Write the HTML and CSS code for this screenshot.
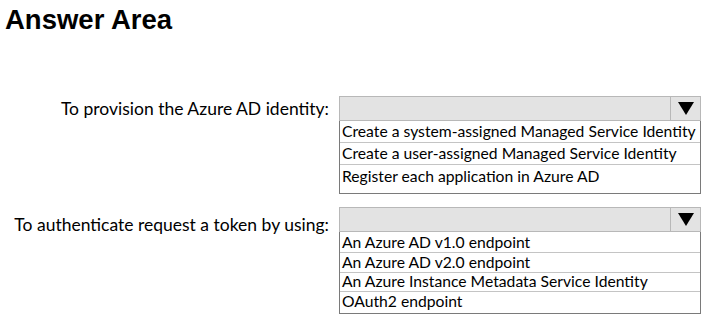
FILE: index.html
```html
<!DOCTYPE html>
<html lang="en">
<head>
	<meta charset="UTF-8">
	<title>Answer Area</title>
	<link rel="stylesheet" href="styles.css">
</head>
<body>
	<h1 class="title">Answer Area</h1>
	<div class="area">
		<div class="label first">To provision the Azure AD identity:</div>
		<div class="dropdown">
			<div class="dd-head"><span class="dd-arrow"></span></div>
			<ul class="dd-list one">
				<li>Create a system-assigned Managed Service Identity</li>
				<li>Create a user-assigned Managed Service Identity</li>
				<li>Register each application in Azure AD</li>
			</ul>
		</div>
		<div class="label second">To authenticate request a token by using:</div>
		<div class="dropdown">
			<div class="dd-head"><span class="dd-arrow"></span></div>
			<ul class="dd-list two">
				<li>An Azure AD v1.0 endpoint</li>
				<li>An Azure AD v2.0 endpoint</li>
				<li>An Azure Instance Metadata Service Identity</li>
				<li>OAuth2 endpoint</li>
			</ul>
		</div>
	</div>
</body>
</html>
```

FILE: styles.css
```css
body{
	margin: 0;
	background: #fff;
	color: #000;
	font-family: Lato, "Open Sans", sans-serif;
}
.title{
	margin: 0;
	padding: 4px 0 0 5px;
	height: 36px;
	font-family: "Liberation Sans", Arial, sans-serif;
	font-size: 27.5px;
	font-weight: bold;
	line-height: 32px;
}
.area{
	display: grid;
	grid-template-columns: 329px 362px;
	column-gap: 10px;
	row-gap: 13px;
	padding-top: 56px;
}
.label{
	text-align: right;
	font-size: 17.5px;
	line-height: 20px;
}
.label.first{
	padding-top: 3px;
}
.label.second{
	padding-top: 8px;
}
.dd-head{
	display: flex;
	justify-content: flex-end;
	height: 23px;
	border: 1px solid #b8b8b8;
	background: #e3e3e3;
}
.dd-arrow{
	width: 29px;
	border-left: 1px solid #b8b8b8;
	display: flex;
	align-items: center;
	justify-content: center;
}
.dd-arrow::after{
	content: "";
	border-left: 8px solid transparent;
	border-right: 8px solid transparent;
	border-top: 13px solid #000;
}
.dd-list{
	list-style: none;
	margin: 0;
	padding: 0;
	border: 1px solid #7a7a7a;
	border-top: none;
	font-size: 15.7px;
}
.dd-list li{
	padding-left: 2px;
	border-bottom: 1px solid #c4c4c4;
	white-space: nowrap;
}
.dd-list li:last-child{
	border-bottom: none;
}
.one li{
	height: 21px;
	line-height: 20px;
}
.one li:last-child{
	height: 28px;
	line-height: 23px;
}
.two li{
	height: 19px;
	line-height: 19px;
}
.two li:first-child{
	height: 20px;
	line-height: 20px;
}
.two li:nth-child(3){
	height: 18px;
	line-height: 16px;
}
.two li:last-child{
	height: 21px;
	line-height: 18px;
}
```
